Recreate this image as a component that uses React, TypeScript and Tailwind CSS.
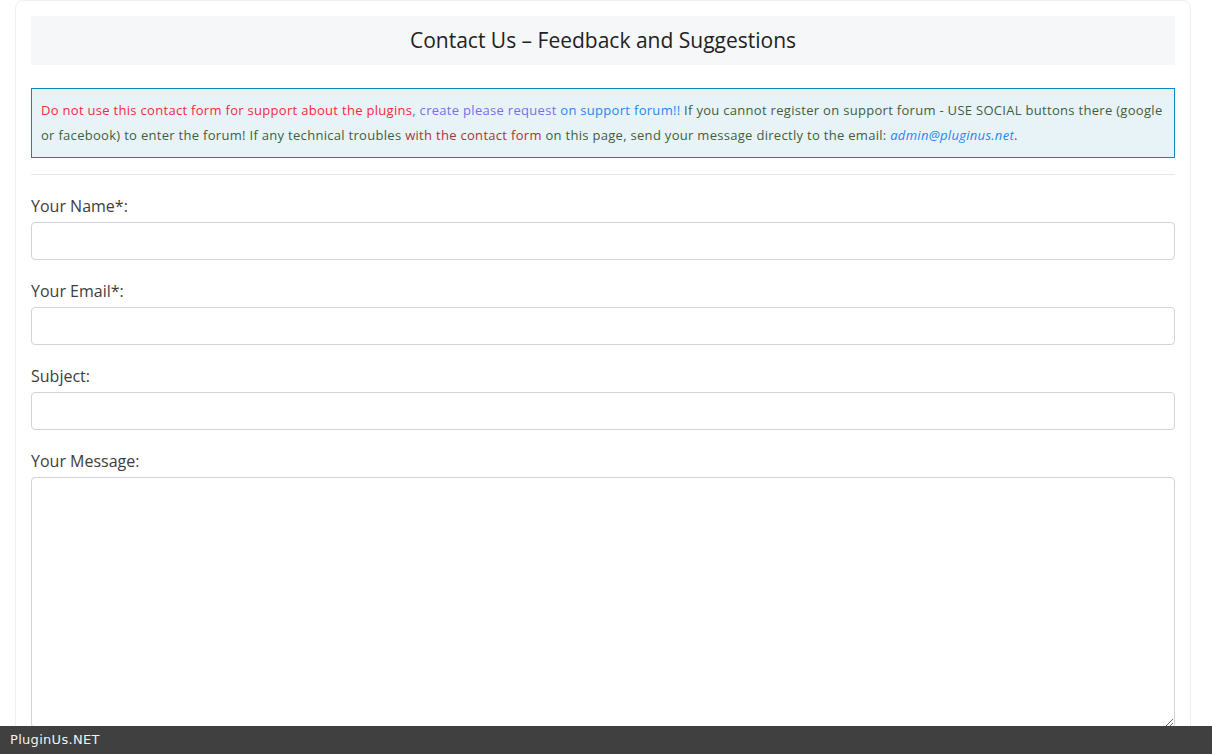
import React from "react";

const fieldClass =
  "block w-full h-[38px] rounded-[4px] border border-[#ced4da] bg-white px-3 text-[15px] outline-none";

function Field({ label, textarea }: { label: string; textarea?: boolean }) {
  return (
    <div className="mt-[19px] first:mt-0">
      <label className="block text-[16px] leading-[24px] text-[#3d3d3d] mb-[4px]">{label}</label>
      {textarea ? (
        <textarea className="block w-full h-[251px] rounded-[4px] border border-[#ced4da] bg-white px-3 py-2 outline-none" />
      ) : (
        <input type="text" className={fieldClass} />
      )}
    </div>
  );
}

export default function App() {
  return (
    <div className="min-h-screen bg-white font-['Open_Sans','Lato',sans-serif]">
      <div className="mx-[15px] w-[1176px] rounded-[8px] border border-[#f0f0f0] bg-white px-[15px] pt-[15px] pb-[40px]">
        <div className="flex h-[49px] items-center justify-center bg-[#f6f7f9]">
          <h1 className="text-[21px] text-[#222]">Contact Us – Feedback and Suggestions</h1>
        </div>

        <div className="mt-[23px] border border-[#0c87c4] bg-[#e8f3f7] px-[9px] py-[9px] text-[13px] leading-[25px] tracking-[0.3px] text-[#3d5f3f]">
          <span className="text-[#f02b3c]">Do not use this contact form for support about the plugins</span>
          <span className="text-[#7a6cf0]">, create please request </span>
          <span className="text-[#1e88f0]">on support forum!!</span> If you cannot register on support forum - USE
          SOCIAL buttons there (google or facebook) to enter the forum! If any technical troubles{" "}
          <span className="text-[#a8343c]">with the contact form</span> on this page, send your message directly to
          the email: <em className="text-[#1e88f0]">admin@pluginus.net</em>.
        </div>

        <hr className="mt-[16px] mb-[19px] border-t border-[#e6e6e6]" />

        <div>
          <Field label="Your Name*:" />
          <Field label="Your Email*:" />
          <Field label="Subject:" />
          <Field label="Your Message:" textarea />
        </div>
      </div>

      <div className="fixed bottom-0 left-0 right-0 flex h-[28px] items-center bg-[#404040] px-[10px] font-['DejaVu_Sans',sans-serif] text-[13px] tracking-[0.3px] text-[#f2f2f2]">
        PluginUs.NET
      </div>
    </div>
  );
}
